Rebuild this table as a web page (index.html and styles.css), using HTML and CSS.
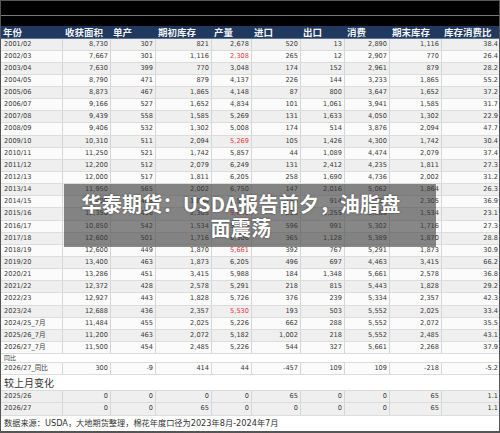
FILE: index.html
```html
<!DOCTYPE html>
<html lang="zh">
<head>
<meta charset="utf-8">
<link rel="stylesheet" href="styles.css">
</head>
<body>
<div class="sheet">
  <div class="top1"></div>
  <div class="top2"></div>
  <div class="row head">
    <div>年份</div><div>收获面积</div><div>单产</div><div>期初库存</div><div>产量</div><div>进口</div><div>出口</div><div>消费</div><div>期末库存</div><div>库存消费比</div>
  </div>
  <div class="row g"><div>2001/02</div><div>8,730</div><div>307</div><div>821</div><div>2,678</div><div>520</div><div>13</div><div>2,890</div><div>1,116</div><div>38.4</div></div>
  <div class="row w"><div>2002/03</div><div>7,667</div><div>301</div><div>1,116</div><div class="red">2,308</div><div>265</div><div>12</div><div>2,907</div><div>770</div><div>26.4</div></div>
  <div class="row g"><div>2003/04</div><div>7,630</div><div>399</div><div>770</div><div>3,048</div><div>174</div><div>152</div><div>2,961</div><div>879</div><div>28.2</div></div>
  <div class="row w"><div>2004/05</div><div>8,790</div><div>471</div><div>879</div><div>4,137</div><div>226</div><div>144</div><div>3,233</div><div>1,865</div><div>55.2</div></div>
  <div class="row g"><div>2005/06</div><div>8,873</div><div>467</div><div>1,865</div><div>4,148</div><div>87</div><div>800</div><div>3,647</div><div>1,652</div><div>37.2</div></div>
  <div class="row w"><div>2006/07</div><div>9,166</div><div>527</div><div>1,652</div><div>4,834</div><div>101</div><div>1,061</div><div>3,941</div><div>1,585</div><div>31.7</div></div>
  <div class="row g"><div>2007/08</div><div>9,439</div><div>558</div><div>1,585</div><div>5,269</div><div>131</div><div>1,633</div><div>4,050</div><div>1,302</div><div>22.9</div></div>
  <div class="row w"><div>2008/09</div><div>9,406</div><div>532</div><div>1,302</div><div>5,008</div><div>174</div><div>514</div><div>3,876</div><div>2,094</div><div>47.7</div></div>
  <div class="row g"><div>2009/10</div><div>10,310</div><div>511</div><div>2,094</div><div class="red">5,269</div><div>105</div><div>1,426</div><div>4,300</div><div>1,742</div><div>30.4</div></div>
  <div class="row w"><div>2010/11</div><div>11,250</div><div>521</div><div>1,742</div><div>5,857</div><div>44</div><div>1,089</div><div>4,474</div><div>2,079</div><div>37.4</div></div>
  <div class="row g"><div>2011/12</div><div>12,200</div><div>512</div><div>2,079</div><div>6,249</div><div>131</div><div>2,412</div><div>4,235</div><div>1,811</div><div>27.3</div></div>
  <div class="row w"><div>2012/13</div><div>12,000</div><div>517</div><div>1,811</div><div>6,205</div><div>258</div><div>1,690</div><div>4,736</div><div>2,002</div><div>31.2</div></div>
  <div class="row g"><div>2013/14</div><div>11,950</div><div>565</div><div>2,002</div><div>6,750</div><div>147</div><div>2,016</div><div>5,062</div><div>1,864</div><div>26.3</div></div>
  <div class="row w"><div>2014/15</div><div>13,400</div><div>488</div><div>1,864</div><div>6,538</div><div>150</div><div>914</div><div>5,333</div><div>2,305</div><div>36.9</div></div>
  <div class="row g"><div>2015/16</div><div>12,350</div><div>456</div><div>2,305</div><div class="red">5,640</div><div>233</div><div>1,255</div><div>5,389</div><div>1,534</div><div>23.1</div></div>
  <div class="row w"><div>2016/17</div><div>10,850</div><div>542</div><div>1,534</div><div>5,879</div><div>596</div><div>991</div><div>5,302</div><div>1,716</div><div>27.3</div></div>
  <div class="row g"><div>2017/18</div><div>12,600</div><div>501</div><div>1,716</div><div>6,306</div><div>365</div><div>1,128</div><div>5,389</div><div>1,870</div><div>28.8</div></div>
  <div class="row w"><div>2018/19</div><div>12,600</div><div>449</div><div>1,870</div><div class="red">5,661</div><div>392</div><div>767</div><div>5,291</div><div>1,873</div><div>30.9</div></div>
  <div class="row g"><div>2019/20</div><div>13,400</div><div>463</div><div>1,873</div><div>6,205</div><div>496</div><div>697</div><div>4,463</div><div>3,415</div><div>66.2</div></div>
  <div class="row w"><div>2020/21</div><div>13,286</div><div>451</div><div>3,415</div><div>5,988</div><div>184</div><div>1,348</div><div>5,661</div><div>2,578</div><div>36.8</div></div>
  <div class="row g"><div>2021/22</div><div>12,372</div><div>428</div><div>2,578</div><div>5,291</div><div>218</div><div>815</div><div>5,443</div><div>1,828</div><div>29.2</div></div>
  <div class="row w"><div>2022/23</div><div>12,927</div><div>443</div><div>1,828</div><div>5,726</div><div>376</div><div>239</div><div>5,334</div><div>2,357</div><div>42.3</div></div>
  <div class="row g"><div>2023/24</div><div>12,688</div><div>436</div><div>2,357</div><div class="red">5,530</div><div>193</div><div>503</div><div>5,552</div><div>2,025</div><div>33.4</div></div>
  <div class="row w"><div>2024/25_7月</div><div>11,484</div><div>455</div><div>2,025</div><div>5,226</div><div>662</div><div>288</div><div>5,552</div><div>2,072</div><div>35.5</div></div>
  <div class="row g"><div>2025/26_7月</div><div>11,200</div><div>463</div><div>2,072</div><div>5,182</div><div>1,002</div><div>218</div><div>5,552</div><div>2,485</div><div>43.1</div></div>
  <div class="row w"><div>2026/27_7月</div><div>11,500</div><div>454</div><div>2,485</div><div>5,226</div><div>544</div><div>327</div><div>5,661</div><div>2,268</div><div>37.9</div></div>
  <div class="label small">同比</div>
  <div class="row w"><div>2026/27_同比</div><div>300</div><div>-9</div><div>414</div><div>44</div><div>-457</div><div>109</div><div>109</div><div>-218</div><div>-5.2</div></div>
  <div class="label big">较上月变化</div>
  <div class="row g"><div>2025/26</div><div>0</div><div>0</div><div>0</div><div>0</div><div>65</div><div>0</div><div>0</div><div>65</div><div>1.1</div></div>
  <div class="row g"><div>2026/27</div><div>0</div><div>0</div><div>65</div><div>0</div><div>0</div><div>0</div><div>0</div><div>65</div><div>1.1</div></div>
  <div class="foot">数据来源：USDA，大地期货整理，棉花年度口径为2023年8月-2024年7月</div>

  <div class="overlay">
    <div class="ov-text">华泰期货：USDA报告前夕，油脂盘<br>面震荡</div>
  </div>
</div>
</body>
</html>
```

FILE: styles.css
```css
html, body {
  margin: 0;
  padding: 0;
  background: #fff;
}
.sheet {
  position: relative;
  width: 500px;
  height: 433px;
  box-sizing: border-box;
  border: 1px solid #555;
  border-bottom-width: 2px;
  overflow: hidden;
  background: #fff;
}
.top1 {
  height: 14px;
  background: #000;
  border-bottom: 1px solid #777;
}
.top2 {
  height: 10px;
  background: #000;
}
.row {
  display: grid;
  grid-template-columns: 62px 48px 45px 56px 40px 49px 44px 45px 52px 57px;
  height: 12.15px;
  box-sizing: border-box;
  border-bottom: 1px solid #dcdcdc;
  font-family: "DejaVu Sans", "Noto Sans CJK SC", sans-serif;
  font-size: 6.6px;
  color: #3a3a3a;
}
.row > div {
  border-right: 1px solid #d6d6d6;
  text-align: right;
  padding-right: 2px;
  line-height: 11px;
  white-space: nowrap;
  overflow: hidden;
}
.row > div:first-child {
  text-align: left;
  padding-left: 3px;
  padding-right: 0;
}
.row > div:last-child {
  border-right: none;
  padding-right: 1px;
}
.row.g { background: #efefef; }
.row.w { background: #fbfbfb; }
.row .red { color: #e8383d; }
.row.head {
  height: 12.5px;
  background: #21395e;
  border-bottom: 1px solid #5c7393;
  font-family: "Noto Sans CJK SC", sans-serif;
  font-size: 9.5px;
  font-weight: 700;
  color: #f4f6fa;
}
.row.head > div {
  text-align: left;
  padding-left: 2px;
  padding-right: 0;
  border-right: none;
  line-height: 12px;
  overflow: visible;
}
.label {
  font-family: "Noto Sans CJK SC", sans-serif;
  color: #333;
  background: #fff;
  border-bottom: 1px solid #dcdcdc;
  box-sizing: border-box;
  padding-left: 3px;
}
.label.small {
  height: 9px;
  font-size: 6px;
  line-height: 8px;
}
.label.big {
  height: 16px;
  font-size: 10px;
  line-height: 15px;
}
.foot {
  height: 15px;
  padding-left: 3px;
  font-family: "DejaVu Sans", "Noto Sans CJK SC", sans-serif;
  font-size: 8.2px;
  line-height: 15px;
  color: #333;
  white-space: nowrap;
}
.overlay {
  position: absolute;
  left: 63px;
  top: 183px;
  width: 372px;
  height: 63px;
  background: rgba(58, 58, 58, 0.6);
  display: flex;
  align-items: center;
  justify-content: center;
  box-sizing: border-box;
  padding-right: 18px;
}
.ov-text {
  font-family: "Noto Sans CJK SC", sans-serif;
  font-weight: 700;
  font-size: 20px;
  line-height: 24px;
  color: #fff;
  text-align: center;
  letter-spacing: 0.3px;
  text-shadow: 0 0 2px rgba(0,0,0,0.5);
}
```
